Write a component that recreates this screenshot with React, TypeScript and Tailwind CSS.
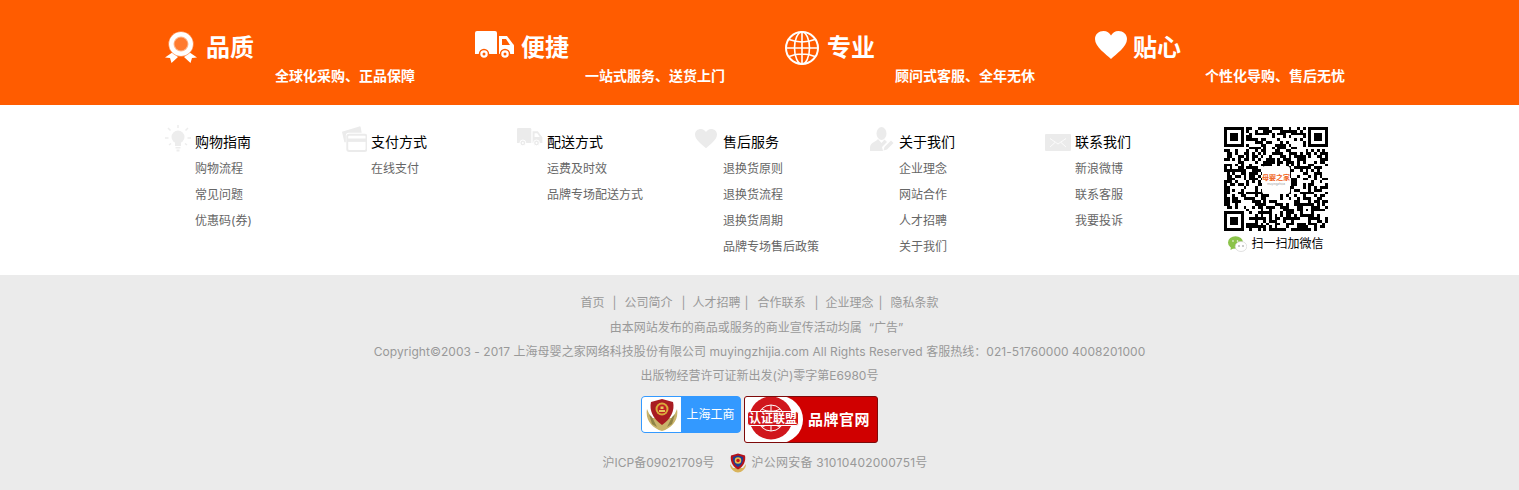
import type { ReactNode } from 'react'

const FONT = "font-['Inter','Noto_Sans_CJK_SC',sans-serif]"

function MedalIcon() {
  return (
    <svg width="32" height="32" viewBox="0 0 32 32">
      <path d="M8 21 L0 26.500 L5 27 L6.500 32 L13 26 Z M24 21 L32 26.500 L27 27 L25.500 32 L19 26 Z" fill="#fff" />
      <circle cx="16" cy="13" r="12.500" fill="#fff" stroke="#ff5c00" strokeWidth="0.500" />
      <circle cx="16" cy="13" r="7.500" fill="#ffb98f" />
      <circle cx="16" cy="13" r="6.500" fill="#ff7a2e" />
    </svg>
  )
}

function TruckIcon({ fill = '#fff', bg = '#ff5c00', size = 40 }: { fill?: string; bg?: string; size?: number }) {
  return (
    <svg width={size} height={size * 0.7} viewBox="0 0 40 28">
      <path d="M0 2 a2 2 0 0 1 2-2 H20 a2 2 0 0 1 2 2 V23 H0 Z" fill={fill} />
      <path d="M24 5 H32 L38 13 a2 2 0 0 1 1 2 V23 H24 Z" fill={fill} />
      <path d="M27 8 H31 L35 14 H27 Z" fill={bg} />
      <circle cx="9" cy="23" r="4.500" fill={fill} stroke={bg} strokeWidth="1.500" />
      <circle cx="9" cy="23" r="1.500" fill={bg} />
      <circle cx="30" cy="23" r="4.500" fill={fill} stroke={bg} strokeWidth="1.500" />
      <circle cx="30" cy="23" r="1.500" fill={bg} />
    </svg>
  )
}

function GlobeIcon() {
  return (
    <svg width="34" height="34" viewBox="0 0 34 34" fill="none" stroke="#fff" strokeWidth="1.600">
      <circle cx="17" cy="17" r="16" strokeWidth="2" />
      <ellipse cx="17" cy="17" rx="7.500" ry="16" />
      <path d="M17 1 V33 M1 17 H33 M4 8.500 C12 11.500 22 11.500 30 8.500 M4 25.500 C12 22.500 22 22.500 30 25.500" />
    </svg>
  )
}

function HeartIcon({ fill = '#fff', size = 32 }: { fill?: string; size?: number }) {
  return (
    <svg width={size} height={size * 0.875} viewBox="0 0 32 28">
      <path d="M16 28 C11 23 0 16 0 8 C0 3 4 0 8.500 0 C12 0 14.500 2 16 4.500 C17.500 2 20 0 23.500 0 C28 0 32 3 32 8 C32 16 21 23 16 28 Z" fill={fill} />
    </svg>
  )
}

function BulbIcon() {
  return (
    <svg width="26" height="27" viewBox="0 0 26 27" fill="#ededed" className="shrink-0">
      <circle cx="13" cy="12" r="6.500" />
      <path d="M10 17 H16 V21 H10 Z M10.500 22 H15.500 V23.500 H10.500 Z M11.500 24.500 H14.500 V26.500 H11.500 Z" />
      <path d="M13 0 V3 M3 3 L5.500 5.500 M23 3 L20.500 5.500 M0 13 H3.500 M22.500 13 H26 M4 20 L6 18.500 M22 20 L20 18.500" stroke="#ededed" strokeWidth="1.500" />
    </svg>
  )
}

function CardIcon() {
  return (
    <svg width="26" height="26" viewBox="0 0 27 27" className="shrink-0">
      <path d="M1 6 L19 0.500 a1 1 0 0 1 1.500 1 L21.500 7 H8 a3 3 0 0 0-3 3 V17 H3.500 Z" fill="#ebebeb" />
      <rect x="6.500" y="9" width="20" height="17" rx="2" fill="none" stroke="#ebebeb" strokeWidth="2" />
      <rect x="6.500" y="13" width="20" height="3.500" fill="#ebebeb" />
    </svg>
  )
}

function UserPenIcon() {
  return (
    <svg width="24" height="24" viewBox="0 0 24 24" fill="#ebebeb" className="shrink-0">
      <ellipse cx="11.500" cy="6.500" rx="5" ry="6.500" />
      <path d="M8 12 C6 15 1 15 0 20 V24 H13 L12 20 L17 15 L14.500 12.500 L11.500 16 Z" />
      <path d="M13.500 23.500 L14.500 20 L21 13.500 L23.500 16 L17 22.500 Z" />
    </svg>
  )
}

function MailIcon() {
  return (
    <svg width="26" height="17" viewBox="0 0 26 17" className="shrink-0">
      <rect width="26" height="17" rx="1" fill="#ebebeb" />
      <path d="M5 4.500 L13 10 L21 4.500 M5 13 L10 8.500 M21 13 L16 8.500" fill="none" stroke="#fff" strokeWidth="0.800" />
    </svg>
  )
}

function WechatIcon() {
  return (
    <svg width="19" height="16" viewBox="0 0 19 16">
      <ellipse cx="7.500" cy="6.500" rx="7.500" ry="6.300" fill="#8bc34a" />
      <path d="M3 10 L2.500 14 L7 11.500 Z" fill="#8bc34a" />
      <ellipse cx="13" cy="10.500" rx="5.800" ry="5" fill="#fff" stroke="#cfcfcf" strokeWidth="0.600" />
      <circle cx="11" cy="10" r="0.800" fill="#888" />
      <circle cx="15" cy="10" r="0.800" fill="#888" />
      <circle cx="5" cy="5" r="0.800" fill="#fff" />
      <circle cx="9.500" cy="5" r="0.800" fill="#fff" />
    </svg>
  )
}

function PoliceEmblem() {
  return (
    <svg width="18" height="20" viewBox="0 0 36 40">
      <path d="M2 22 C2 33 12 39 18 39 C24 39 34 33 34 22 L28 30 H8 Z" fill="#d9b45c" />
      <path d="M18 1 L32 5 C34 15 30 27 18 33 C6 27 2 15 4 5 Z" fill="#b5121b" />
      <path d="M18 5 L28 8 C29 15 26 24 18 28 C10 24 7 15 8 8 Z" fill="#1c3f94" />
      <circle cx="18" cy="15" r="6.500" fill="#e8c04f" />
      <circle cx="18" cy="15" r="3.500" fill="#c8161d" />
    </svg>
  )
}

function CommerceEmblem() {
  return (
    <svg width="32" height="34" viewBox="0 0 32 34">
      <path d="M1 11 C-1 22 6 30 16 33 C26 30 33 22 31 11 L27 20 H5 Z" fill="#c9b36a" />
      <path d="M3 16 L6 26 L11 29 L6 19 Z M29 16 L26 26 L21 29 L26 19 Z" fill="#8f8345" />
      <path d="M16 1 L27 4 C29 12 25 21 16 27 C7 21 3 12 5 4 Z" fill="#a81c22" />
      <circle cx="16" cy="11" r="6.500" fill="#d9a93a" />
      <circle cx="16" cy="11" r="4.500" fill="#c01f24" />
      <path d="M13 12 H19 V14 H13 Z M14.500 8.500 H17.500 V11 H14.500 Z" fill="#e5c65a" />
    </svg>
  )
}

function inFinder(x: number, y: number, n: number) {
  return (x < 8 && y < 8) || (x >= n - 8 && y < 8) || (x < 8 && y >= n - 8)
}

// not the real code, modules come from a fixed seed
function QrCode() {
  const n = 37
  let seed = 90210
  const next = () => {
    seed = (seed * 1103515245 + 12345) & 0x7fffffff
    return (seed >> 16) & 1
  }
  let d = ''
  for (let y = 0; y < n; y++) {
    for (let x = 0; x < n; x++) {
      const bit = next()
      if (inFinder(x, y, n)) continue
      if (x >= 27 && x < 32 && y >= 27 && y < 32) continue
      if (bit) d += `M${x} ${y}h1v1h-1z`
    }
  }
  const finders = [[0, 0], [30, 0], [0, 30]]
  return (
    <div className="relative h-[104px] w-[104px]">
      <svg width="104" height="104" viewBox="0 0 37 37" shapeRendering="crispEdges">
        <path d={d} fill="#000" />
        {finders.map(([x, y]) => (
          <g key={`${x}-${y}`}>
            <path d={`M${x} ${y}h7v7h-7z M${x + 1} ${y + 1}v5h5v-5z`} fill="#000" fillRule="evenodd" />
            <rect x={x + 2} y={y + 2} width="3" height="3" fill="#000" />
          </g>
        ))}
        <path d="M27 27h5v5h-5z M28 28v3h3v-3z" fill="#000" fillRule="evenodd" />
        <rect x="29" y="29" width="1" height="1" fill="#000" />
      </svg>
      <div className="absolute left-[38px] top-[39px] flex h-[28px] w-[28px] flex-col items-center justify-center rounded-[3px] bg-white">
        <span className="whitespace-nowrap text-[7px] font-bold leading-[8px] text-[#f0651f]">母婴之家</span>
        <span className="whitespace-nowrap text-[3px] leading-[4px] text-[#999]">muyingzhijia</span>
      </div>
    </div>
  )
}

interface FeatureProps {
  icon: ReactNode
  title: string
  sub: string
  gap: string
}

function Feature({ icon, title, sub, gap }: FeatureProps) {
  return (
    <div className="w-[310px] shrink-0">
      <div className={`flex h-[34px] ${gap}`}>
        <div className="mt-[1px] shrink-0">{icon}</div>
        <span className="mt-[1px] text-[24px] font-bold leading-[34px] text-white">{title}</span>
      </div>
      <p className="ml-[110px] mt-[2px] w-[140px] text-[14px] font-bold leading-[20px] text-white">{sub}</p>
    </div>
  )
}

interface LinkColumnProps {
  icon: ReactNode
  title: string
  links: string[]
  iconBox: string
}

function LinkColumn({ icon, title, links, iconBox }: LinkColumnProps) {
  return (
    <div className="flex w-[176px] shrink-0">
      <div className={`flex h-[30px] w-[30px] shrink-0 items-start ${iconBox}`}>{icon}</div>
      <div>
        <h3 className="mb-[4px] mt-[7px] text-[14px] font-normal leading-[20px] text-black">{title}</h3>
        {links.map((l) => (
          <p key={l} className="text-[12px] leading-[26px] text-[#666]">{l}</p>
        ))}
      </div>
    </div>
  )
}

const NAV: { label: string; sep?: string }[] = [
  { label: '首页', sep: 'w-[20px] pl-[8px]' },
  { label: '公司简介', sep: 'w-[20px] pl-[9px]' },
  { label: '人才招聘', sep: 'w-[17px] pl-[4px]' },
  { label: '合作联系', sep: 'w-[20px] pl-[9px]' },
  { label: '企业理念', sep: 'w-[17px] pl-[5px]' },
  { label: '隐私条款' },
]

export default function App() {
  return (
    <div className={`h-[490px] w-full overflow-hidden bg-white ${FONT}`}>
      <div className="h-[105px] bg-[#ff5c00] pt-[30px]">
        <div className="ml-[165px] flex">
          <Feature icon={<MedalIcon />} title="品质" sub="全球化采购、正品保障" gap="gap-[9px]" />
          <Feature icon={<TruckIcon />} title="便捷" sub="一站式服务、送货上门" gap="gap-[6px]" />
          <Feature icon={<GlobeIcon />} title="专业" sub="顾问式客服、全年无休" gap="gap-[8px]" />
          <Feature icon={<HeartIcon />} title="贴心" sub="个性化导购、售后无忧" gap="gap-[6px]" />
        </div>
      </div>

      <div className="h-[170px] bg-white pt-[20px]">
        <div className="ml-[165px] flex">
          <LinkColumn icon={<BulbIcon />} iconBox="" title="购物指南" links={['购物流程', '常见问题', '优惠码(券)']} />
          <LinkColumn icon={<CardIcon />} iconBox="pt-[1px]" title="支付方式" links={['在线支付']} />
          <LinkColumn icon={<TruckIcon fill="#ebebeb" bg="#fff" size={26} />} iconBox="pt-[3px]" title="配送方式" links={['运费及时效', '品牌专场配送方式']} />
          <LinkColumn icon={<HeartIcon fill="#ebebeb" size={22} />} iconBox="pl-[2px] pt-[4px]" title="售后服务" links={['退换货原则', '退换货流程', '退换货周期', '品牌专场售后政策']} />
          <LinkColumn icon={<UserPenIcon />} iconBox="pl-[1px] pt-[2px]" title="关于我们" links={['企业理念', '网站合作', '人才招聘', '关于我们']} />
          <div className="w-[179px] shrink-0">
            <LinkColumn icon={<MailIcon />} iconBox="pt-[9px]" title="联系我们" links={['新浪微博', '联系客服', '我要投诉']} />
          </div>
          <div className="flex flex-col items-center">
            <div className="mt-[2px]"><QrCode /></div>
            <div className="mt-[3px] flex items-center gap-[4px]">
              <WechatIcon />
              <span className="text-[12px] leading-[20px] text-black">扫一扫加微信</span>
            </div>
          </div>
        </div>
      </div>

      <div className="h-[215px] bg-[#ebebeb] pt-[16px] text-center text-[12px] leading-[24px] text-[#999]">
        <div className="flex h-[25px] justify-center leading-[24px]">
          {NAV.map((n) => (
            <span key={n.label} className="flex">
              <span>{n.label}</span>
              {n.sep && <span className={`${n.sep} text-left`}>|</span>}
            </span>
          ))}
        </div>
        <p className="pr-[6px]">由本网站发布的商品或服务的商业宣传活动均属<span className="pl-[7px]">“广告”</span></p>
        <p className="tracking-[0.04px]">Copyright©2003 - 2017 上海母婴之家网络科技股份有限公司 muyingzhijia.com All Rights Reserved 客服热线：021-51760000 4008201000</p>
        <p>出版物经营许可证新出发(沪)零字第E6980号</p>
        <div className="mt-[8px] flex items-start justify-center gap-[3px]">
          <div className="flex h-[37px] w-[100px] items-center overflow-hidden rounded-[4px] border border-[#3399ff] bg-[#3399ff]">
            <div className="flex h-full w-[39px] items-center justify-center bg-white"><CommerceEmblem /></div>
            <span className="flex-1 text-[12px] text-white">上海工商</span>
          </div>
          <div className="flex h-[47px] w-[134px] items-center overflow-hidden rounded-[3px] border border-[#7d0a0a] bg-[#d00000]">
            <div className="relative h-[47px] w-[58px] shrink-0 rounded-r-full bg-white">
              <svg width="44" height="44" viewBox="0 0 44 44" className="absolute left-[4px] top-[0px]">
                <circle cx="22" cy="22" r="21.500" fill="#d0161c" />
                <circle cx="22" cy="22" r="13" fill="none" stroke="#fff" strokeWidth="1" />
                <path d="M9 22 H35 M22 9 V35 M13 13 C18 16 26 16 31 13 M13 31 C18 28 26 28 31 31" fill="none" stroke="#fff" strokeWidth="1" />
              </svg>
              <span className="absolute left-[2px] top-[15px] whitespace-nowrap rounded-[3px] border border-white bg-[#d0161c] px-[1px] text-[12px] font-bold leading-[13px] text-white">认证联盟</span>
            </div>
            <span className="ml-[5px] whitespace-nowrap text-[15px] font-bold leading-[20px] tracking-[0.5px] text-white">品牌官网</span>
          </div>
        </div>
        <div className="mt-[8px] flex items-center justify-center pl-[11px]">
          <span>沪ICP备09021709号</span>
          <span className="ml-[14px] mr-[5px] flex"><PoliceEmblem /></span>
          <span className="tracking-[0.2px]">沪公网安备 31010402000751号</span>
        </div>
      </div>
    </div>
  )
}
